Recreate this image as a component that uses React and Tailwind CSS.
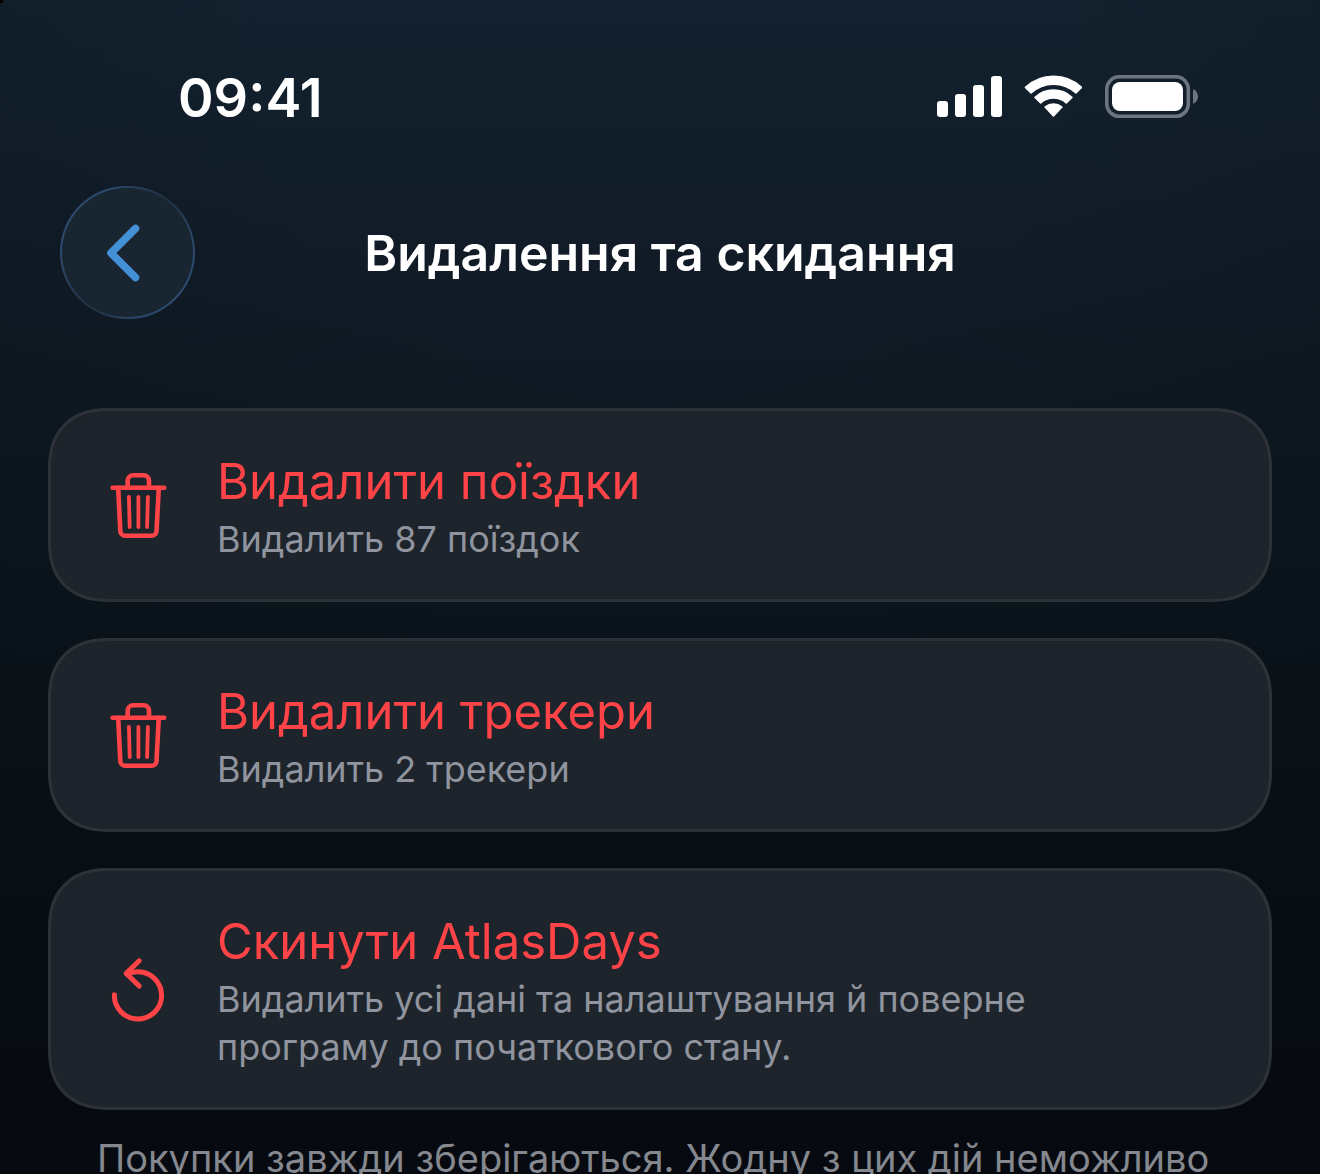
const TrashIcon = () => (
  <svg
    width="64"
    height="72"
    viewBox="0 2 64 72"
    fill="none"
    stroke="currentColor"
    strokeWidth="4.6"
    strokeLinecap="round"
    strokeLinejoin="round"
    className="shrink-0"
    aria-hidden="true"
  >
    <path d="M6.6 18.8H58.2" />
    <path d="M21.7 18.8V11.7a5.5 5.5 0 0 1 5.5-5.5H37.5a5.5 5.5 0 0 1 5.5 5.5v7.1" />
    <path d="M12.2 18.8l2.1 43.2a5 5 0 0 0 5 4.8h26.2a5 5 0 0 0 5-4.8l2.3-43.2" />
    <path d="M22.9 28l.8 30M32.4 28v30M41.9 28l-.8 30" strokeWidth="3.8" />
  </svg>
);

const ResetIcon = () => (
  <svg
    width="64"
    height="72"
    viewBox="0 2 64 72"
    fill="none"
    stroke="currentColor"
    strokeWidth="5"
    strokeLinecap="round"
    strokeLinejoin="round"
    className="shrink-0"
    aria-hidden="true"
  >
    <path d="M8.4 41.8A23.6 23.6 0 1 0 32.2 18.8c-4 0-8 .6-11.5 1.6" />
    <path d="M33.2 7.8L20.2 20.4L33.2 33" />
  </svg>
);

const StatusBar = () => (
  <div className="pt-[65px] pl-[178px] pr-[122px] flex justify-between items-start">
    <span className="text-white text-[54px] leading-[66px] font-semibold">
      09:41
    </span>
    <div className="pt-[10px] flex items-center gap-[22px] text-white">
      <svg width="66" height="44" viewBox="0 0 66 44" fill="currentColor" aria-hidden="true">
        <rect x="1" y="26" width="11" height="16" rx="3" />
        <rect x="19" y="19" width="11" height="23" rx="3" />
        <rect x="37" y="10" width="11" height="32" rx="3" />
        <rect x="55" y="1" width="11" height="41" rx="3" />
      </svg>
      <svg
        width="58"
        height="44"
        viewBox="-.5 0 58 44"
        fill="currentColor"
        stroke="currentColor"
        strokeWidth="1.6"
        strokeLinejoin="round"
        aria-hidden="true"
      >
        <path d="M1 12.4A41 41 0 0 1 57 12.4L51.4 18A32.8 32.8 0 0 0 6.6 18Z" />
        <path d="M10.6 22.4A27 27 0 0 1 47.4 22.4L41.8 27.8A19.4 19.4 0 0 0 16.2 27.8Z" />
        <path d="M20.6 32A13.4 13.4 0 0 1 37.4 32L29 41Z" />
      </svg>
      <svg width="94" height="44" viewBox="0 0 94 44" aria-hidden="true">
        <rect x="2.8" y="1.8" width="81.5" height="39.5" rx="12.5" fill="none" stroke="#6c747d" strokeWidth="3.6" />
        <rect x="8" y="7" width="71" height="29" rx="8" fill="currentColor" />
        <path d="M89 14.2c3 1 5 4 5 7.3s-2 6.3-5 7.3z" fill="#6c747d" />
      </svg>
    </div>
  </div>
);

const actions = [
  {
    icon: TrashIcon,
    title: "Видалити поїздки",
    description: "Видалить 87 поїздок",
  },
  {
    icon: TrashIcon,
    title: "Видалити трекери",
    description: "Видалить 2 трекери",
  },
  {
    icon: ResetIcon,
    title: "Скинути AtlasDays",
    description: "Видалить усі дані та налаштування й поверне програму до початкового стану.",
  },
];

const App = () => {
  return (
    <div className="relative h-screen overflow-hidden bg-[radial-gradient(ellipse_75%_80%_at_50%_0%,transparent_40%,rgba(8,12,16,0.25)_100%),linear-gradient(to_bottom,#12212e,#111c28_20%,#0b161e_50%,#070f15_75%,#060910)] font-['Inter',sans-serif]">
      <div className="absolute top-0 left-0 size-[3px] bg-black"></div>
      <StatusBar />

      <header className="mt-[55px] px-[60px] grid grid-cols-[135px_1fr_135px] items-center">
        <button
          type="button"
          aria-label="Назад"
          className="h-[133px] rounded-full p-[2px] bg-linear-[125deg,#2f517b,#2b4767_25%,#1f303f_50%,#2b4767_75%,#2f517b]"
        >
          <span className="size-full rounded-full bg-[#192632] flex justify-center items-center text-[#4490d6]">
            <svg
              width="48"
              height="60"
              viewBox="1 0 48 60"
              fill="none"
              stroke="currentColor"
              strokeWidth="7.6"
              strokeLinecap="round"
              strokeLinejoin="round"
              aria-hidden="true"
            >
              <path d="M32.5 5.5L8 30L32.5 54.5" />
            </svg>
          </span>
        </button>
        <h1 className="text-center text-white text-[50px] leading-[60px] font-semibold whitespace-nowrap">
          Видалення та скидання
        </h1>
      </header>

      <main className="mt-[89px] px-12 flex flex-col gap-9">
        {actions.map(({ icon: Icon, title, description }) => (
          <button
            key={title}
            type="button"
            className="w-full pt-10 pb-9 px-[55px] rounded-[60px] [corner-shape:superellipse(1.2)] border-3 border-[#2d3238] bg-[#1e242b] flex items-center gap-[47px] text-left text-[#ff4347]"
          >
            <Icon />
            <span className="flex-1 flex flex-col gap-0.5">
              <span className="text-[49px] leading-[62px]">{title}</span>
              <span className="max-w-[860px] text-[36px] leading-[48px] text-[#8f949e]">
                {description}
              </span>
            </span>
          </button>
        ))}
      </main>

      <p className="mt-6 px-[97px] text-[38px] leading-[48px] text-[#85888e] whitespace-nowrap">
        Покупки завжди зберігаються. Жодну з цих дій неможливо
      </p>
    </div>
  );
};

export default App;
